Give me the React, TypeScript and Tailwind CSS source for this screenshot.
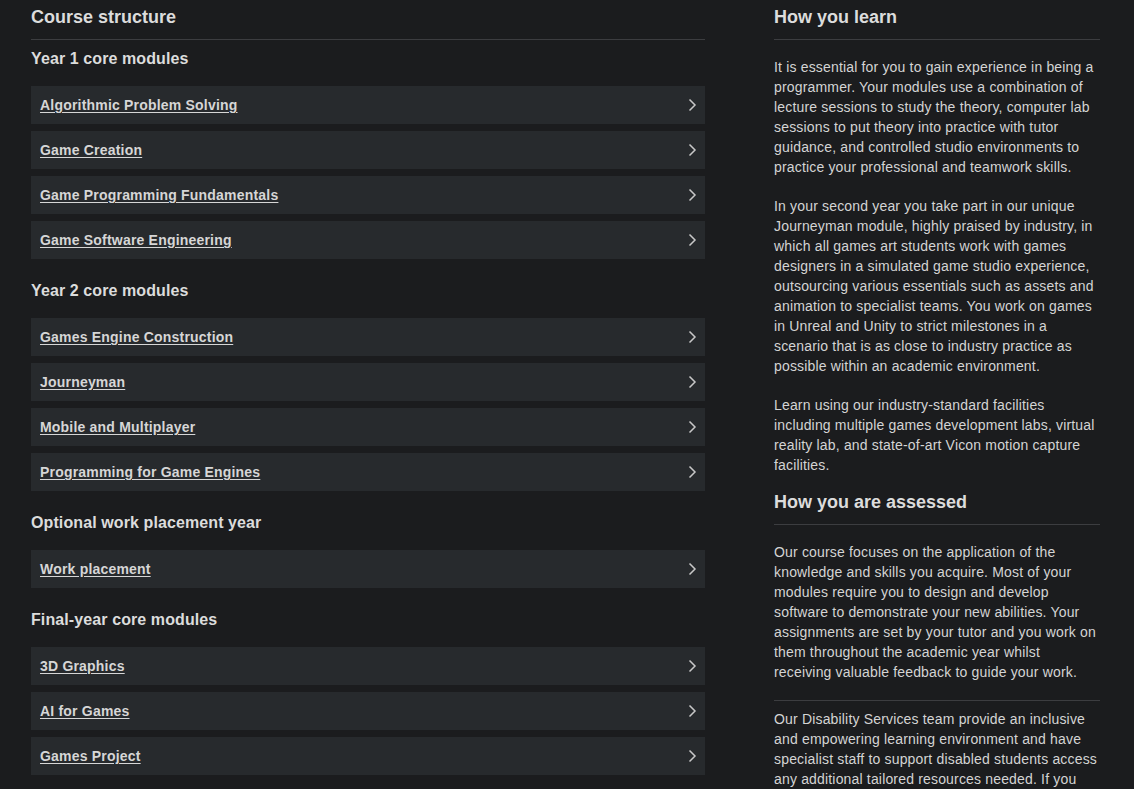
import React from "react";

const SECTIONS: { title: string; modules: string[] }[] = [
  {
    title: "Year 1 core modules",
    modules: [
      "Algorithmic Problem Solving",
      "Game Creation",
      "Game Programming Fundamentals",
      "Game Software Engineering",
    ],
  },
  {
    title: "Year 2 core modules",
    modules: [
      "Games Engine Construction",
      "Journeyman",
      "Mobile and Multiplayer",
      "Programming for Game Engines",
    ],
  },
  { title: "Optional work placement year", modules: ["Work placement"] },
  {
    title: "Final-year core modules",
    modules: ["3D Graphics", "AI for Games", "Games Project"],
  },
];

// line breaks follow the original column wrapping
const LEARN: string[][] = [
  [
    "It is essential for you to gain experience in being a",
    "programmer. Your modules use a combination of",
    "lecture sessions to study the theory, computer lab",
    "sessions to put theory into practice with tutor",
    "guidance, and controlled studio environments to",
    "practice your professional and teamwork skills.",
  ],
  [
    "In your second year you take part in our unique",
    "Journeyman module, highly praised by industry, in",
    "which all games art students work with games",
    "designers in a simulated game studio experience,",
    "outsourcing various essentials such as assets and",
    "animation to specialist teams. You work on games",
    "in Unreal and Unity to strict milestones in a",
    "scenario that is as close to industry practice as",
    "possible within an academic environment.",
  ],
  [
    "Learn using our industry-standard facilities",
    "including multiple games development labs, virtual",
    "reality lab, and state-of-art Vicon motion capture",
    "facilities.",
  ],
];

const ASSESSED = [
  "Our course focuses on the application of the",
  "knowledge and skills you acquire. Most of your",
  "modules require you to design and develop",
  "software to demonstrate your new abilities. Your",
  "assignments are set by your tutor and you work on",
  "them throughout the academic year whilst",
  "receiving valuable feedback to guide your work.",
];

const DISABILITY = [
  "Our Disability Services team provide an inclusive",
  "and empowering learning environment and have",
  "specialist staff to support disabled students access",
  "any additional tailored resources needed. If you",
];

function Lines({ lines }: { lines: string[] }) {
  return (
    <>
      {lines.map((l, i) => (
        <span key={i} className="block whitespace-nowrap">
          {l}
        </span>
      ))}
    </>
  );
}

function Chevron() {
  return (
    <svg width="10" height="14" viewBox="0 0 10 14" fill="none" className="text-[#c8c8c8]">
      <path d="M2.5 1.5 L8 7 L2.5 12.5" stroke="currentColor" strokeWidth="1.5" />
    </svg>
  );
}

function ModuleRow({ name }: { name: string }) {
  return (
    <a
      href="#"
      className="flex h-[38px] items-center justify-between bg-[#272a2d] pl-[9px] pr-[8px]"
    >
      <span className="text-[14px] font-bold leading-[18px] tracking-[0.2px] text-[#d6d6d6] underline underline-offset-2">
        {name}
      </span>
      <Chevron />
    </a>
  );
}

export default function App() {
  return (
    <div
      className="flex min-h-screen gap-[69px] bg-[#1b1c1e] px-[31px] text-[#d4d4d4]"
      style={{ fontFamily: '"Liberation Sans", Arial, sans-serif' }}
    >
      {/* Course structure */}
      <div className="w-[674px] shrink-0">
        <h2 className="border-b border-[#3c3d40] pb-[11px] pt-[6px] text-[18px] font-bold leading-[22px] text-[#dcdcdc]">
          Course structure
        </h2>
        <div className="flex flex-col gap-[22px] pt-[9px]">
          {SECTIONS.map((s) => (
            <div key={s.title}>
              <h3 className="text-[16px] font-bold leading-[20px] tracking-[0.1px] text-[#dcdcdc]">
                {s.title}
              </h3>
              <div className="mt-[17px] flex flex-col gap-[7px]">
                {s.modules.map((m) => (
                  <ModuleRow key={m} name={m} />
                ))}
              </div>
            </div>
          ))}
        </div>
      </div>

      {/* Right column */}
      <div className="w-[326px] shrink-0 text-[14px] leading-[20px] tracking-[0.17px]">
        <h2 className="border-b border-[#3c3d40] pb-[11px] pt-[6px] text-[18px] font-bold leading-[22px] tracking-normal text-[#dcdcdc]">
          How you learn
        </h2>
        <div className="flex flex-col gap-[19px] pt-[17px]">
          {LEARN.map((p, i) => (
            <p key={i}>
              <Lines lines={p} />
            </p>
          ))}
        </div>
        <h2 className="mt-[16px] border-b border-[#3c3d40] pb-[11px] text-[18px] font-bold leading-[22px] tracking-normal text-[#dcdcdc]">
          How you are assessed
        </h2>
        <p className="border-b border-[#3c3d40] pb-[18px] pt-[17px]">
          <Lines lines={ASSESSED} />
        </p>
        <p className="pt-[8px]">
          <Lines lines={DISABILITY} />
        </p>
      </div>
    </div>
  );
}
